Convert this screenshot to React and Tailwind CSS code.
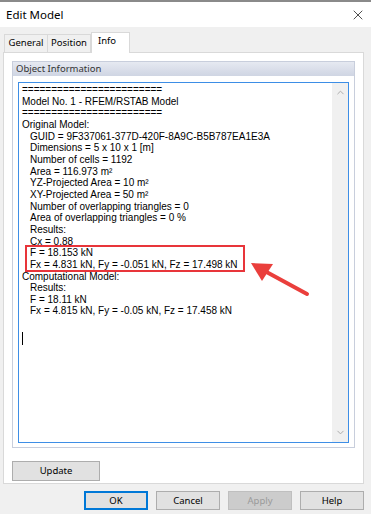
import { X, ChevronUp, ChevronDown } from "lucide-react";

const lines = [
  { t: "========================", i: 0 },
  { t: "Model No. 1 - RFEM/RSTAB Model", i: 0 },
  { t: "========================", i: 0 },
  { t: "Original Model:", i: 0 },
  { t: "GUID = 9F337061-377D-420F-8A9C-B5B787EA1E3A", i: 1 },
  { t: "Dimensions = 5 x 10 x 1 [m]", i: 1 },
  { t: "Number of cells = 1192", i: 1 },
  { t: "Area = 116.973 m²", i: 1 },
  { t: "YZ-Projected Area = 10 m²", i: 1 },
  { t: "XY-Projected Area = 50 m²", i: 1 },
  { t: "Number of overlapping triangles = 0", i: 1 },
  { t: "Area of overlapping triangles = 0 %", i: 1 },
  { t: "Results:", i: 1 },
  { t: "Cx = 0.88", i: 1 },
  { t: "F = 18.153 kN", i: 1 },
  { t: "Fx = 4.831 kN, Fy = -0.051 kN, Fz = 17.498 kN", i: 1 },
  { t: "Computational Model:", i: 0 },
  { t: "Results:", i: 1 },
  { t: "F = 18.11 kN", i: 1 },
  { t: "Fx = 4.815 kN, Fy = -0.05 kN, Fz = 17.458 kN", i: 1 },
];

const Button = ({ children, primary, disabled }) => (
  <button
    className={`w-[64px] h-[19px] text-[9.5px] leading-none ${
      primary
        ? "border-2 border-[#0078d7] bg-[#e1e1e1] text-black"
        : disabled
        ? "border border-[#bfbfbf] bg-[#cccccc] text-[#9a9a9a]"
        : "border border-[#adadad] bg-[#e1e1e1] text-black"
    }`}
  >
    {children}
  </button>
);

export default function App() {
  return (
    <div
      className="w-[371px] h-[514px] bg-[#f0f0f0] flex flex-col border-t-2 border-[#8a8a8a] text-black"
      style={{ fontFamily: '"Noto Sans", "Liberation Sans", sans-serif' }}
    >
      {/* title bar */}
      <div className="h-[25px] bg-white flex items-center justify-between pl-[6px] pr-[5px]">
        <span className="text-[11.5px]">Edit Model</span>
        <X size={16} strokeWidth={1.2} className="text-[#222]" />
      </div>

      {/* tabs */}
      <div className="flex items-end pl-[4px] mt-[5px] h-[20px] relative z-10">
        <div className="h-[18px] w-[44px] border border-b-0 border-[#d9d9d9] bg-[#f0f0f0] text-[9.5px] flex items-center justify-center">
          General
        </div>
        <div className="h-[18px] w-[43px] border border-l-0 border-b-0 border-[#d9d9d9] bg-[#f0f0f0] text-[9.5px] flex items-center justify-center">
          Position
        </div>
        <div className="h-[21px] w-[39px] -mb-px pl-[6px] border border-b-0 border-[#d9d9d9] bg-white text-[9.5px] flex items-start pt-[1px]">
          Info
        </div>
      </div>

      {/* tab panel */}
      <div className="ml-[3px] w-[361px] h-[432px] border border-[#d9d9d9] bg-white flex flex-col px-[8px] pt-[8px]">
        <div className="h-[387px] border border-[#c8cedc] flex flex-col">
          <div className="h-[14px] bg-gradient-to-b from-[#e6e9f1] to-[#cfd5e3] text-[9.5px] leading-[14px] pl-[3px] text-[#333]">
            Object Information
          </div>
          <div className="flex-1 px-[5px] pt-[6px] pb-[4px]">
            <div className="h-full border border-[#3d8ee6] flex relative">
              <div
                className="flex-1 pl-[3px] pt-[1px] text-[10px] leading-[11.65px]"
                style={{ fontFamily: '"Liberation Sans", Arial, sans-serif' }}
              >
                {lines.map((l, k) => (
                  <div key={k} className={`whitespace-nowrap ${l.i ? "pl-[8px]" : ""}`}>
                    {l.t}
                  </div>
                ))}
                <div className="h-[11.65px]" />
                <div className="w-px h-[13px] bg-black mt-[3px]" />
              </div>
              <div className="w-[16px] bg-[#f0f0f0] flex flex-col justify-between items-center py-[4px]">
                <ChevronUp size={11} strokeWidth={2} className="text-[#a6a6a6]" />
                <ChevronDown size={11} strokeWidth={2} className="text-[#a6a6a6]" />
              </div>

              {/* annotation */}
              <div className="absolute left-[6px] top-[162px] w-[220px] h-[27px] border-2 border-[#e8353a]" />
              <svg
                className="absolute left-[228px] top-[176px]"
                width="64"
                height="40"
                viewBox="0 0 64 40"
              >
                <line x1="60" y1="35" x2="14" y2="10" stroke="#ea3f3c" strokeWidth="4" strokeLinecap="round" />
                <polygon points="4,4 26,5 15,22" fill="#ea3f3c" />
              </svg>
            </div>
          </div>
        </div>
        <div className="mt-[8px]">
          <button className="w-[88px] h-[20px] border border-[#adadad] bg-[#e1e1e1] text-[9.5px]">
            Update
          </button>
        </div>
      </div>

      {/* dialog buttons */}
      <div className="flex justify-end gap-[8px] pr-[7px] mt-[7px]">
        <Button primary>OK</Button>
        <Button>Cancel</Button>
        <Button disabled>Apply</Button>
        <Button>Help</Button>
      </div>
    </div>
  );
}
